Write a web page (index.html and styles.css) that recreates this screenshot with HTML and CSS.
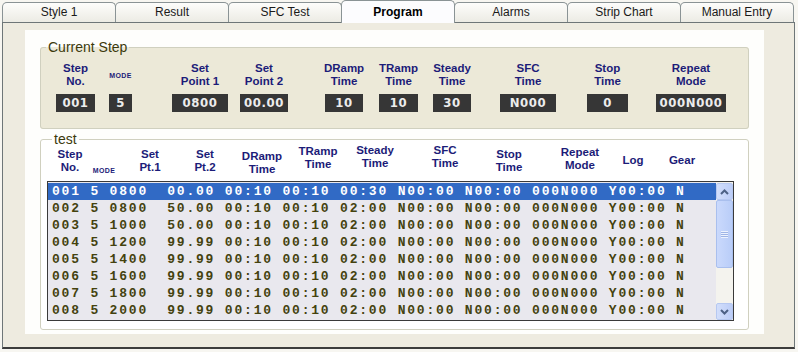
FILE: index.html
```html
<!DOCTYPE html>
<html lang="en">
<head>
    <meta charset="UTF-8">
    <title>Program</title>
    <link rel="stylesheet" href="styles.css">
</head>
<body>
    <div class="window">
        <div class="tabs">
            <div class="tab">Style 1</div>
            <div class="tab">Result</div>
            <div class="tab">SFC Test</div>
            <div class="tab active">Program</div>
            <div class="tab">Alarms</div>
            <div class="tab">Strip Chart</div>
            <div class="tab">Manual Entry</div>
        </div>
        <div class="panel">
            <div class="sheet">
                <fieldset class="group current-step">
                    <legend>Current Step</legend>
                    <div class="fields">
                        <div class="field f-step"><div class="label">Step<br>No.</div><div class="value">001</div></div>
                        <div class="field f-mode"><div class="label"><span class="mode">MODE</span></div><div class="value">5</div></div>
                        <div class="field f-sp1"><div class="label">Set<br>Point 1</div><div class="value">0800</div></div>
                        <div class="field f-sp2"><div class="label">Set<br>Point 2</div><div class="value">00.00</div></div>
                        <div class="field f-dramp"><div class="label">DRamp<br>Time</div><div class="value">10</div></div>
                        <div class="field f-tramp"><div class="label">TRamp<br>Time</div><div class="value">10</div></div>
                        <div class="field f-steady"><div class="label">Steady<br>Time</div><div class="value">30</div></div>
                        <div class="field f-sfc"><div class="label">SFC<br>Time</div><div class="value">N000</div></div>
                        <div class="field f-stop"><div class="label">Stop<br>Time</div><div class="value">0</div></div>
                        <div class="field f-repeat"><div class="label">Repeat<br>Mode</div><div class="value">000N000</div></div>
                    </div>
                </fieldset>

                <fieldset class="group test">
                    <legend>test</legend>
                    <div class="heads">
                        <div class="head h-step">Step<br>No.</div>
                        <div class="head h-mode"><span class="mode">MODE</span></div>
                        <div class="head h-sp1">Set<br>Pt.1</div>
                        <div class="head h-sp2">Set<br>Pt.2</div>
                        <div class="head h-dramp">DRamp<br>Time</div>
                        <div class="head h-tramp">TRamp<br>Time</div>
                        <div class="head h-steady">Steady<br>Time</div>
                        <div class="head h-sfc">SFC<br>Time</div>
                        <div class="head h-stop">Stop<br>Time</div>
                        <div class="head h-repeat">Repeat<br>Mode</div>
                        <div class="head h-log">Log</div>
                        <div class="head h-gear">Gear</div>
                    </div>
                    <div class="listbox">
                        <div class="rows">
                            <div class="row selected">001 5 0800  00.00 00:10 00:10 00:30 N00:00 N00:00 000N000 Y00:00 N</div>
                            <div class="row">002 5 0800  50.00 00:10 00:10 02:00 N00:00 N00:00 000N000 Y00:00 N</div>
                            <div class="row">003 5 1000  50.00 00:10 00:10 02:00 N00:00 N00:00 000N000 Y00:00 N</div>
                            <div class="row">004 5 1200  99.99 00:10 00:10 02:00 N00:00 N00:00 000N000 Y00:00 N</div>
                            <div class="row">005 5 1400  99.99 00:10 00:10 02:00 N00:00 N00:00 000N000 Y00:00 N</div>
                            <div class="row">006 5 1600  99.99 00:10 00:10 02:00 N00:00 N00:00 000N000 Y00:00 N</div>
                            <div class="row">007 5 1800  99.99 00:10 00:10 02:00 N00:00 N00:00 000N000 Y00:00 N</div>
                            <div class="row">008 5 2000  99.99 00:10 00:10 02:00 N00:00 N00:00 000N000 Y00:00 N</div>
                        </div>
                        <div class="scrollbar">
                            <div class="sb-btn">
                                <svg width="9" height="6" viewBox="0 0 9 6"><polyline points="1,5 4.5,1.5 8,5" fill="none" stroke="#4d6185" stroke-width="2"/></svg>
                            </div>
                            <div class="sb-thumb"><span class="grip"></span></div>
                            <div class="sb-track"></div>
                            <div class="sb-btn">
                                <svg width="9" height="6" viewBox="0 0 9 6"><polyline points="1,1 4.5,4.5 8,1" fill="none" stroke="#4d6185" stroke-width="2"/></svg>
                            </div>
                        </div>
                    </div>
                </fieldset>
            </div>
        </div>
    </div>
</body>
</html>
```

FILE: styles.css
```css
* {
    margin: 0;
    padding: 0;
    box-sizing: border-box;
}

body {
    width: 798px;
    height: 352px;
    overflow: hidden;
    background: #f7f6f1;
    font-family: 'Liberation Sans', Arial, sans-serif;
    color: #000;
}

.window {
    padding: 0 3px 0 2px;
}

/* tab strip */
.tabs {
    display: flex;
    align-items: flex-end;
    height: 22px;
}

.tab {
    width: 114px;
    height: 20px;
    margin-right: -1px;
    border: 1px solid #8a9395;
    border-bottom: none;
    border-radius: 5px 5px 0 0;
    background: linear-gradient(#fdfdfb, #ecebe4);
    font-size: 12px;
    line-height: 18px;
    text-align: center;
    color: #1a1a1a;
}

.tab.active {
    position: relative;
    z-index: 1;
    height: 23px;
    margin-bottom: -1px;
    background: #fcfcfe;
    font-weight: bold;
    line-height: 22px;
    color: #000;
}

.panel {
    height: 327px;
    border: 1px solid #6e7678;
    border-bottom: 2px solid #3c3c3c;
    background: #eeebe0;
    padding: 7px 30px 0 22px;
}

.sheet {
    height: 304px;
    background: #fefefc;
    padding: 10px 15px 0 15px;
}

/* group boxes */
.group {
    border: 1px solid #d0d0bf;
    border-radius: 3px;
}

.group legend {
    margin-left: 5px;
    padding: 0 2px;
    font-size: 14px;
    line-height: 15px;
    color: #3c3a0c;
}

.current-step {
    height: 89px;
    background: #ece9d8;
    padding: 7px 0 0 0;
}

.fields {
    display: flex;
    align-items: flex-start;
}

.field {
    display: flex;
    flex-direction: column;
}

.label {
    height: 26px;
    display: flex;
    align-items: center;
    justify-content: center;
    text-align: center;
    white-space: nowrap;
    font-size: 11.5px;
    font-weight: bold;
    line-height: 13px;
    color: #1c1c78;
    margin-bottom: 6px;
}

.mode {
    font-size: 7px;
    line-height: 9px;
    letter-spacing: 0.4px;
    font-weight: bold;
    color: #1c1c78;
}

.value {
    height: 18px;
    background: #363636;
    color: #ececec;
    font-family: 'DejaVu Sans', 'Liberation Sans', sans-serif;
    font-stretch: condensed;
    font-weight: bold;
    font-size: 13px;
    line-height: 18px;
    text-align: center;
    letter-spacing: 0.6px;
}

.f-step { width: 39px; margin-left: 15px; }
.f-mode { width: 23px; margin-left: 14px; }
.f-sp1 { width: 56px; margin-left: 40px; }
.f-sp2 { width: 48px; margin-left: 12px; }
.f-dramp { width: 38px; margin-left: 37px; }
.f-tramp { width: 39px; margin-left: 16px; }
.f-steady { width: 38px; margin-left: 15px; }
.f-sfc { width: 56px; margin-left: 29px; }
.f-stop { width: 41px; margin-left: 31px; }
.f-repeat { width: 70px; margin-left: 28px; }

/* program list */
.test {
    margin-top: 3px;
    height: 198px;
    background: #fff;
    padding: 0 14px 0 6px;
}

.heads {
    display: flex;
    height: 37px;
    margin-top: -3px;
}

.head {
    text-align: center;
    white-space: nowrap;
    font-size: 11.5px;
    font-weight: bold;
    line-height: 13px;
    color: #1c1c78;
}

.h-step { width: 40px; margin-left: 3px; padding-top: 4px; }
.h-mode { width: 24px; margin-left: 2px; padding-top: 19px; }
.h-sp1 { width: 36px; margin-left: 16px; padding-top: 4px; }
.h-sp2 { width: 36px; margin-left: 19px; padding-top: 4px; }
.h-dramp { width: 44px; margin-left: 17px; padding-top: 6px; }
.h-tramp { width: 44px; margin-left: 12px; padding-top: 1px; }
.h-steady { width: 46px; margin-left: 12px; padding-top: 0; }
.h-sfc { width: 40px; margin-left: 27px; padding-top: 0; }
.h-stop { width: 40px; margin-left: 24px; padding-top: 4px; }
.h-repeat { width: 50px; margin-left: 26px; padding-top: 2px; }
.h-log { width: 30px; margin-left: 13px; padding-top: 10px; }
.h-gear { width: 34px; margin-left: 17px; padding-top: 10px; }

.listbox {
    display: flex;
    height: 140px;
    border: 1px solid #3a3a3a;
    background: #e9e8ee;
}

.rows {
    flex: 1;
    padding-top: 1px;
}

.row {
    height: 17px;
    padding-left: 4px;
    white-space: pre;
    font-family: 'Liberation Mono', 'DejaVu Sans Mono', monospace;
    font-weight: bold;
    font-size: 13px;
    letter-spacing: 1.8px;
    line-height: 17px;
    color: #44420e;
}

.row.selected {
    background: #316ac5;
    color: #fff;
}

.scrollbar {
    width: 17px;
    display: flex;
    flex-direction: column;
    background: #f4f3ee;
    padding-top: 1px;
}

.sb-btn {
    height: 17px;
    display: flex;
    align-items: center;
    justify-content: center;
    border: 1px solid #b6c8f1;
    border-radius: 2px;
    background: linear-gradient(90deg, #d2defb, #bccdf7);
}

.sb-thumb {
    height: 68px;
    display: flex;
    align-items: center;
    justify-content: center;
    border: 1px solid #a9bfee;
    border-radius: 2px;
    background: linear-gradient(90deg, #cad9fc, #b9cdf8);
}

.grip {
    width: 7px;
    height: 7px;
    background: repeating-linear-gradient(#eef3fe 0 1px, #9fb5e6 1px 2px);
}

.sb-track {
    flex: 1;
}
```
